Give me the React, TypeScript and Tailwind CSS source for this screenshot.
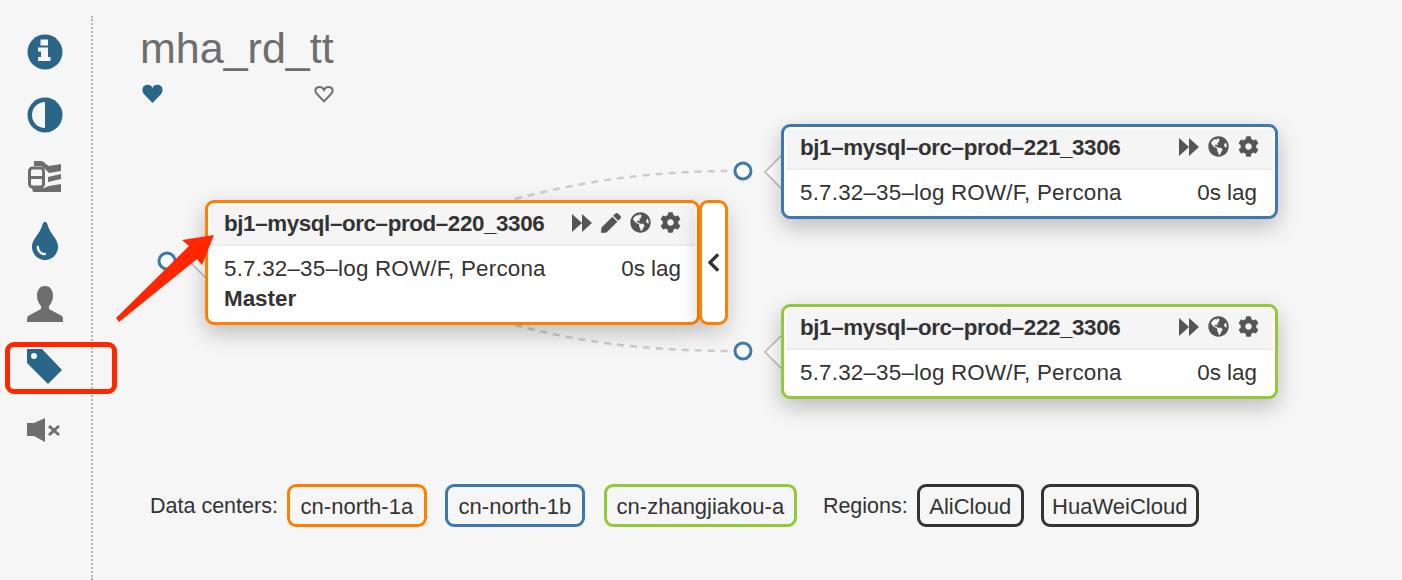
import React from 'react';
import { FaChevronLeft, FaCog, FaGlobeAmericas, FaPen, FaTint } from 'react-icons/fa';

const BLUE = 'text-[#2a6687]';
const GREY = 'text-[#6e6e6e]';

const Forward = () => (
  <svg width="20" height="20" viewBox="0 0 20 20" fill="currentColor">
    <polygon points="0,1 10,10 0,19" />
    <polygon points="10,1 20,10 10,19" />
  </svg>
);

const InfoSign = () => (
  <svg width="36" height="36" viewBox="0 0 36 36" className={BLUE}>
    <circle cx="18" cy="18" r="17.500" fill="currentColor" />
    <path d="M13.500 5.500H21V11.500H13.500ZM11 13.500H21V23H23.500V27H11V23H14V17.500H11Z" fill="#f6f6f6" />
  </svg>
);

const HalfCircle = () => (
  <svg width="36" height="36" viewBox="0 0 36 36" className={BLUE}>
    <circle cx="18" cy="18" r="17.500" fill="currentColor" />
    <path d="M18 5A13 13 0 0 0 18 31Z" fill="#f6f6f6" />
  </svg>
);

const Compressed = () => (
  <svg width="34" height="33" viewBox="0 0 34 33" fill="currentColor" className={GREY}>
    <rect x="1.5" y="7" width="14" height="19" rx="3" fill="none" stroke="currentColor" strokeWidth="3" />
    <path d="M1.5 16.5H15.5" fill="none" stroke="currentColor" strokeWidth="3" />
    <path d="M6 0H13C15 0 16 1 18 3L21 5L33 3V10L21 12L17 8C15 6 14 5 12 5H6Z" />
    <polygon points="20,16 33,13 33,18 20,21" />
    <path d="M4 27H16L21 25L33 23V31H5Z" />
  </svg>
);

const UserBust = () => (
  <svg width="36" height="36" viewBox="0 0 36 36" fill="currentColor" className={GREY}>
    <path d="M18 0C12 0 10 5 10 10C10 14 12 18 14 20V23L1 30Q0 31 0 36H36Q36 31 35 30L22 23V20C24 18 26 14 26 10C26 5 24 0 18 0Z" />
  </svg>
);

const Tag = () => (
  <svg width="36" height="36" viewBox="0 0 36 36" className={BLUE}>
    <polygon points="0,0 15,0 35,21 21,35 0,14" fill="currentColor" />
    <circle cx="7" cy="7" r="3" fill="#f6f6f6" />
  </svg>
);

const VolumeOff = () => (
  <svg width="34" height="26" viewBox="0 0 34 26" fill="currentColor" className={`${GREY} mr-[1px]`}>
    <polygon points="0,6 7,6 18,1 18,25 7,19 0,19" />
    <path d="M22 9L32 18M32 9L22 18" stroke="currentColor" strokeWidth="3" fill="none" />
  </svg>
);

const sideIcons = [
  <InfoSign key="info" />,
  <HalfCircle key="adjust" />,
  <Compressed key="compressed" />,
  <FaTint key="tint" size={38} className={BLUE} />,
  <UserBust key="user" />,
  <Tag key="tag" />,
  <VolumeOff key="volume" />,
];

type NodeProps = {
  name: string;
  border: string;
  className: string;
  master?: boolean;
};

const InstanceNode = ({ name, border, className, master }: NodeProps) => (
  <div className={`absolute rounded-[9px] border-[3px] bg-white p-[2px] shadow-[0_8px_22px_rgba(0,0,0,0.24)] ${border} ${className}`}>
    <div className="flex h-[41px] items-center justify-between border-b-2 border-[#ececec] bg-[#f5f5f5] px-[14px]">
      <span className="pb-[1px] text-[22.4px] font-bold tracking-[-0.4px] text-[#333]">{name}</span>
      <div className="flex items-center gap-[9px] pb-[4px] text-[#555]">
        <Forward />
        {master && <FaPen size={20} />}
        <FaGlobeAmericas size={21} />
        <FaCog size={21} />
      </div>
    </div>
    <div className="px-[14px] pb-[6px] pt-[8px] text-[22.4px] leading-[30px] text-[#333]">
      <div className={master ? 'flex justify-between' : 'flex justify-between pr-[2px]'}>
        <span className="tracking-[0.2px]">5.7.32–35–log ROW/F, Percona</span>
        <span>0s lag</span>
      </div>
      {master && <div className="font-bold">Master</div>}
    </div>
  </div>
);

const Chip = ({ label, className }: { label: string; className: string }) => (
  <span className={`flex h-[43px] items-center justify-center rounded-[9px] border-[3px] pt-[1px] text-[22px] ${className}`}>{label}</span>
);

export default function App() {
  return (
    <div className="relative flex h-[580px] w-[1402px] overflow-hidden bg-[#f6f6f6] font-['Liberation_Sans',sans-serif]">
      <aside className="mt-4 flex h-[564px] w-[93px] shrink-0 flex-col border-r-2 border-dotted border-[#b5b5b5] pt-1">
        {sideIcons.map((icon) => (
          <div key={icon.key} className="flex h-[63px] w-[89px] items-center justify-center">
            {icon}
          </div>
        ))}
      </aside>

      <main className="flex-1">
        <div className="h-[110px] pl-[47px] pt-[23px]">
          <h1 className="text-[43px] leading-[50px] text-[#6e6e6e]">mha_rd_tt</h1>
          <div className="ml-[2px] mt-[11px] flex w-[192px] items-center justify-between">
            <svg width="21" height="19" viewBox="0 0 24 22" className={BLUE} fill="currentColor">
              <path d="M12 22L2 11.5C-1 8 0 1 6.5 1C9 1 11 2.500 12 4.500C13 2.500 15 1 17.500 1C24 1 25 8 22 11.500Z" />
            </svg>
            <svg width="20" height="18" viewBox="0 0 24 22" className={GREY} fill="none" stroke="currentColor" strokeWidth="2.500">
              <path d="M12 20L3 10.500C0 7 1.500 2.500 6.500 2.500C9 2.500 11 4 12 6C13 4 15 2.500 17.500 2.500C22.500 2.500 24 7 21 10.500Z" />
            </svg>
          </div>
        </div>

        <div className="relative h-[374px]">
          <svg className="absolute inset-0" width="1309" height="374" viewBox="93 110 1309 374" fill="none">
            <path d="M515 199C590 179 660 171 735 171" stroke="#cccccc" strokeWidth="2.500" strokeDasharray="7 6" />
            <path d="M515 325C590 345 660 351 735 351" stroke="#cccccc" strokeWidth="2.500" strokeDasharray="7 6" />
            <circle cx="167" cy="261" r="8" fill="#fff" stroke="#3f78ae" strokeWidth="3" />
            <circle cx="743" cy="171" r="8" fill="#fff" stroke="#3f78ae" strokeWidth="3" />
            <circle cx="743" cy="351" r="8" fill="#fff" stroke="#3f78ae" strokeWidth="3" />
            <polygon points="208,244 190,262 208,280" fill="#fff" stroke="#b8b8b8" strokeWidth="1.500" />
            <polygon points="783,154 765,172 783,190" fill="#fff" stroke="#b8b8b8" strokeWidth="1.500" />
            <polygon points="783,334 765,352 783,370" fill="#fff" stroke="#b8b8b8" strokeWidth="1.500" />
          </svg>

          <InstanceNode name="bj1–mysql–orc–prod–220_3306" border="border-[#ff8000]" className="left-[112px] top-[90px] w-[495px]" master />
          <div className="absolute left-[606px] top-[90px] flex h-[125px] w-[29px] items-center justify-center rounded-[9px] border-[3px] border-[#ff8000] bg-white pb-[1px] text-[#333] shadow-[0_8px_22px_rgba(0,0,0,0.2)]">
            <FaChevronLeft size={21} />
          </div>
          <InstanceNode name="bj1–mysql–orc–prod–221_3306" border="border-[#3f78ae]" className="left-[688px] top-[14px] w-[497px]" />
          <InstanceNode name="bj1–mysql–orc–prod–222_3306" border="border-[#92c83a]" className="left-[688px] top-[194px] w-[497px]" />
        </div>

        <div className="flex items-center pl-[57px] text-[21.5px] text-[#333]">
          <span className="mr-[9px] pt-[1px]">Data centers:</span>
          <Chip label="cn-north-1a" className="w-[140px] border-[#ff8000]" />
          <span className="w-[18px]" />
          <Chip label="cn-north-1b" className="w-[140px] border-[#3f78ae]" />
          <span className="w-[19px]" />
          <Chip label="cn-zhangjiakou-a" className="w-[193px] border-[#92c83a]" />
          <span className="ml-[26px] mr-[9px] pt-[1px]">Regions:</span>
          <Chip label="AliCloud" className="w-[107px] border-[#333]" />
          <span className="w-[17px]" />
          <Chip label="HuaWeiCloud" className="w-[158px] border-[#333]" />
        </div>
      </main>

      {/* annotation drawn over the screenshot */}
      <div className="pointer-events-none absolute left-[5px] top-[342px] h-[52px] w-[112px] rounded-[9px] border-[5px] border-[#ff2600]" />
      <svg className="pointer-events-none absolute inset-0" width="1402" height="580" viewBox="0 0 1402 580">
        <polygon points="116,318 119,322 197,259 202,265 214,235 182,240 189,246" fill="#ff2600" />
      </svg>
    </div>
  );
}
